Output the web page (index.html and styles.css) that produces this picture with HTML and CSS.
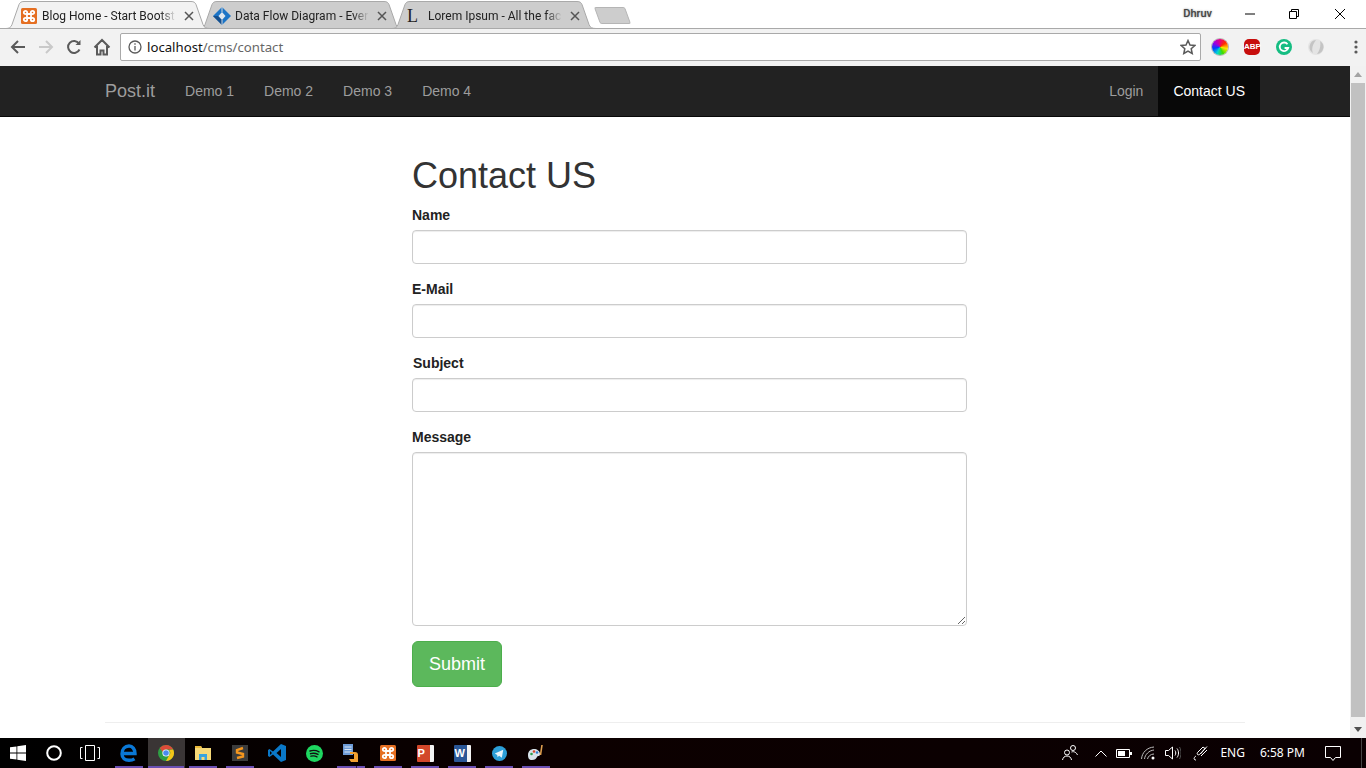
FILE: index.html
```html
<!DOCTYPE html>
<html lang="en">
<head>
    <meta charset="UTF-8">
    <meta name="viewport" content="width=device-width, initial-scale=1.0">
    <title>Contact US</title>
    <link rel="stylesheet" href="styles.css">
</head>
<body>
    <svg class="defs" width="0" height="0" aria-hidden="true">
        <symbol id="tab-shape" viewBox="0 0 204 28">
            <path d="M0 28c3 0 5-1 6-4l7-20c1-2 2-3 5-3h167c3 0 4 1 5 3l7 20c1 3 3 4 7 4z"/>
        </symbol>
        <symbol id="xampp" viewBox="0 0 16 16">
            <rect width="16" height="16" rx="1.5" fill="#e56f22"/>
            <g fill="none" stroke="#fff" stroke-width="1.800">
                <path d="M6 6h4v4H6z"/>
                <circle cx="4.500" cy="4.500" r="1.700"/>
                <circle cx="11.500" cy="4.500" r="1.700"/>
                <circle cx="4.500" cy="11.500" r="1.700"/>
                <circle cx="11.500" cy="11.500" r="1.700"/>
            </g>
            <path d="M6.900 7.300h2.200v1.400H6.900z" fill="#e56f22"/>
        </symbol>
        <symbol id="tab-x" viewBox="0 0 10 10">
            <path d="M1 1l8 8M9 1L1 9" stroke="#555" stroke-width="1.500"/>
        </symbol>
    </svg>

    <div class="tabstrip">
        <div class="tab active">
            <svg class="tab-bg"><use href="#tab-shape"/></svg>
            <svg class="favicon" width="16" height="16"><use href="#xampp"/></svg>
            <span class="tab-title">Blog Home - Start Bootst</span>
            <svg class="tab-close" width="10" height="10"><use href="#tab-x"/></svg>
        </div>
        <div class="tab">
            <svg class="tab-bg"><use href="#tab-shape"/></svg>
            <svg class="favicon wide" width="18" height="18" viewBox="0 0 18 18">
                <path d="M9 0l9 9-9 9-9-9z" fill="#1c74c6"/>
                <path d="M0 9l9 9V13L5 9z" fill="#164f8c"/>
                <path d="M9 5l3.500 4L9 13 5.500 9z" fill="#dfe6ee"/>
                <path d="M8.500 0h1v5h-1zM8.500 13h1v5h-1z" fill="#cfd6de"/>
            </svg>
            <span class="tab-title">Data Flow Diagram - Ever</span>
            <svg class="tab-close" width="10" height="10"><use href="#tab-x"/></svg>
        </div>
        <div class="tab">
            <svg class="tab-bg"><use href="#tab-shape"/></svg>
            <span class="favicon serif-l">L</span>
            <span class="tab-title">Lorem Ipsum - All the fac</span>
            <svg class="tab-close" width="10" height="10"><use href="#tab-x"/></svg>
        </div>
        <div class="new-tab"></div>
        <div class="window-bar">
            <span class="profile">Dhruv</span>
            <div class="window-buttons">
                <svg width="10" height="10" viewBox="0 0 10 10"><path d="M0 5h10" stroke="#000"/></svg>
                <svg width="10" height="10" viewBox="0 0 10 10" fill="none" stroke="#000"><path d="M.5 2.500h7v7h-7zM2.500 2.500v-2h7v7h-2"/></svg>
                <svg width="12" height="12" viewBox="0 0 12 12"><path d="M1 1l10 10M11 1L1 11" stroke="#000"/></svg>
            </div>
        </div>
    </div>

    <div class="toolbar">
        <div class="nav-buttons">
            <svg width="16" height="16" viewBox="0 0 16 16" fill="none" stroke="#5a5a5a" stroke-width="2"><path d="M15 8H2M8 2L2 8l6 6"/></svg>
            <svg width="16" height="16" viewBox="0 0 16 16" fill="none" stroke="#c9c9c9" stroke-width="2"><path d="M1 8h13M8 2l6 6-6 6"/></svg>
            <svg width="16" height="16" viewBox="0 0 16 16" fill="none" stroke="#5a5a5a" stroke-width="2"><path d="M13.500 10.500A6 6 0 1 1 13 4.500"/><path d="M14.500 1v5h-5z" fill="#5a5a5a" stroke="none"/></svg>
            <svg class="home" width="18" height="18" viewBox="0 0 18 18" fill="none" stroke="#5a5a5a" stroke-width="2"><path d="M1.500 9.500L9 2l7.500 7.500M4 8v8.500h3.500v-4h3v4H14V8"/></svg>
        </div>
        <div class="omnibox">
            <svg width="14" height="14" viewBox="0 0 14 14" fill="none" stroke="#5a5a5a" stroke-width="1.300"><circle cx="7" cy="7" r="6"/><path d="M7 6v4.500M7 3.200v1.500"/></svg>
            <span class="url"><span class="url-host">localhost</span>/cms/contact</span>
            <svg class="star" width="16" height="16" viewBox="0 0 16 16" fill="none" stroke="#5a5a5a" stroke-width="1.500"><path d="M8 1.500l2 4.500 4.800.500-3.600 3.200 1 4.800L8 12l-4.200 2.500 1-4.800L1.200 6.500 6 6z"/></svg>
        </div>
        <div class="extensions">
            <span class="ext-wheel"></span>
            <span class="ext-abp">ABP</span>
            <svg width="16" height="16" viewBox="0 0 16 16"><circle cx="8" cy="8" r="8" fill="#15bd82"/><path d="M11.500 5.200A4.300 4.300 0 1 0 12.200 9H8.600" fill="none" stroke="#fff" stroke-width="1.800"/></svg>
            <svg width="16" height="16" viewBox="0 0 16 16"><circle cx="8" cy="8" r="8" fill="#e4e4e4"/><path d="M8 1a7 7 0 0 0-3 13c-2-4 0-9 3-13zM9 15a7 7 0 0 0 3-13c1 4 0 9-3 13z" fill="#c4c4c4"/></svg>
            <svg class="menu-dots" width="4" height="14" viewBox="0 0 4 14" fill="#5a5a5a"><circle cx="2" cy="2" r="1.600"/><circle cx="2" cy="7" r="1.600"/><circle cx="2" cy="12" r="1.600"/></svg>
        </div>
    </div>

    <div class="viewport">
        <div class="page">
            <nav class="navbar">
                <div class="container nav-inner">
                    <a class="brand">Post.it</a>
                    <a class="nav-link">Demo 1</a>
                    <a class="nav-link">Demo 2</a>
                    <a class="nav-link">Demo 3</a>
                    <a class="nav-link">Demo 4</a>
                    <a class="nav-link push-right">Login</a>
                    <a class="nav-link current">Contact US</a>
                </div>
            </nav>
            <div class="container">
                <form class="contact-form">
                    <h1>Contact US</h1>
                    <div class="form-group">
                        <label for="name">Name</label>
                        <input type="text" id="name">
                    </div>
                    <div class="form-group">
                        <label for="email">E-Mail</label>
                        <input type="text" id="email">
                    </div>
                    <div class="form-group">
                        <label class="nudge" for="subject">Subject</label>
                        <input type="text" id="subject">
                    </div>
                    <div class="form-group">
                        <label for="message">Message</label>
                        <textarea id="message"></textarea>
                    </div>
                    <button type="button" class="submit">Submit</button>
                </form>
                <hr class="footer-line">
            </div>
        </div>
        <div class="scrollbar">
            <span class="arrow-up"></span>
            <div class="scroll-track"><div class="scroll-thumb"></div></div>
            <span class="arrow-down"></span>
        </div>
    </div>

    <div class="taskbar">
        <div class="task-left">
            <div class="task-sys">
                <svg width="16" height="16" viewBox="0 0 16 16" fill="#fff"><path d="M0 2.300l6.500-.9v6.200H0zM7.300 1.300L16 0v7.600H7.300zM0 8.400h6.500v6.200L0 13.700zM7.300 8.400H16V16l-8.700-1.300z"/></svg>
            </div>
            <div class="task-sys">
                <svg width="16" height="16" viewBox="0 0 16 16" fill="none" stroke="#fff" stroke-width="2"><circle cx="8" cy="8" r="6.800"/></svg>
            </div>
            <div class="task-sys">
                <svg width="20" height="16" viewBox="0 0 20 16" fill="none" stroke="#fff"><path d="M5.500.5h9v15h-9zM2.500 2.500H.5v11h2M17.500 2.500h2v11h-2"/></svg>
            </div>
            <div class="task-app open">
                <svg width="18" height="18" viewBox="0 0 18 18" fill="none" stroke="#0a78d7" stroke-width="3.400"><path d="M2.500 9.500h12.500C15 5 12.500 2 9 2 5 2 2 5 2 10c0 4 3 6.300 7 6.300 2 0 4-.5 5.500-1.500"/></svg>
            </div>
            <div class="task-app open active">
                <svg width="16" height="16" viewBox="0 0 16 16">
                    <circle cx="8" cy="8" r="8" fill="#2f9e44"/>
                    <path d="M8 0a8 8 0 0 1 7.200 4.500H8A3.500 3.500 0 0 0 4.700 7L1.800 2.900A8 8 0 0 1 8 0z" fill="#dd4b39"/>
                    <path d="M15.200 4.500A8 8 0 0 1 8 16l3-5.500A3.500 3.500 0 0 0 11 5z" fill="#f5c518"/>
                    <circle cx="8" cy="8" r="3.600" fill="#fff"/>
                    <circle cx="8" cy="8" r="2.800" fill="#4a8af0"/>
                </svg>
            </div>
            <div class="task-app open">
                <svg width="16" height="16" viewBox="0 0 16 16">
                    <path d="M0 1h6l1 2h9v12H0z" fill="#f6d978"/>
                    <path d="M0 1h6l1 2H0z" fill="#e9b93b"/>
                    <path d="M4 9h8v6H9.500v-3h-3v3H4z" fill="#38a3de"/>
                </svg>
            </div>
            <div class="task-app open">
                <svg width="16" height="16" viewBox="0 0 16 16">
                    <rect width="16" height="16" fill="#3c3c3c"/>
                    <path d="M11 4L5 6v2.500L11 10v2.500L5 14" transform="translate(0 -1)" fill="none" stroke="#f5961e" stroke-width="2.400"/>
                </svg>
            </div>
            <div class="task-app">
                <svg width="18" height="18" viewBox="0 0 18 18" fill="#0a78c8"><path d="M13 0l5 2v14l-5 2-8-7.500L1.500 13 0 12V6l1.500-1L5 7.500zM13 5L8.500 9 13 13zM2 7v4l2-2z"/></svg>
            </div>
            <div class="task-app">
                <svg width="17" height="17" viewBox="0 0 17 17"><circle cx="8.500" cy="8.500" r="8.500" fill="#1ed760"/><path d="M4 6c3-1 6-.8 9 .8M4.500 8.700c2.500-.8 5-.6 7.500.7M5 11.200c2-.6 4-.5 6 .6" fill="none" stroke="#111" stroke-width="1.400" stroke-linecap="round"/></svg>
            </div>
            <div class="task-app open stacked">
                <svg width="18" height="18" viewBox="0 0 18 18">
                    <rect x="1" y="0" width="10" height="11" fill="#6d9bd6"/>
                    <path d="M2.500 3h7M2.500 5.500h7M2.500 8h7" stroke="#d9e6f5"/>
                    <path d="M8 8h5c2 0 3 1 3 3v7H9l-2-3h5v-5H8z" fill="#f0a030"/>
                </svg>
            </div>
            <div class="task-app open"><svg width="16" height="16"><use href="#xampp"/></svg></div>
            <div class="task-app open">
                <span class="office-doc ppt"><span class="office-letter">P</span></span>
            </div>
            <div class="task-app open">
                <span class="office-doc word"><span class="office-letter">W</span></span>
            </div>
            <div class="task-app open">
                <svg width="15" height="15" viewBox="0 0 16 16"><circle cx="8" cy="8" r="8" fill="#2c9fd8"/><path d="M3 8l9-4-1.500 8.500-3-2-1.500 1.500-.5-2.500z" fill="#e6f4fb"/></svg>
            </div>
            <div class="task-app open">
                <svg width="18" height="18" viewBox="0 0 18 18">
                    <path d="M1 11c0-4 3-6 6-6s6 2 6 5-2 1-3 3-2 3-5 3-4-2-4-5z" fill="#d8e3ea"/>
                    <circle cx="4.500" cy="10" r="1.300" fill="#2e9e4f"/><circle cx="7" cy="7.500" r="1.300" fill="#d9472b"/><circle cx="10" cy="8.500" r="1.300" fill="#2f7fd1"/>
                    <path d="M15 1l-1.500 10" stroke="#e0a050" stroke-width="1.600"/>
                </svg>
            </div>
        </div>
        <div class="tray">
            <svg class="tray-people" width="16" height="16" viewBox="0 0 16 16" fill="none" stroke="#fff"><circle cx="5" cy="7.500" r="2.500"/><path d="M.5 15c.5-2.500 2-4 4.500-4s4 1.500 4.500 4"/><circle cx="11" cy="3" r="2.500"/><path d="M9.500 7c2.500-1 5 .5 6 3"/></svg>
            <svg class="tray-chevron" width="12" height="7" viewBox="0 0 12 7" fill="none" stroke="#fff"><path d="M.5 6.500L6 1l5.500 5.500"/></svg>
            <svg class="tray-battery" width="16" height="9" viewBox="0 0 16 9"><path d="M.5.500h13v8H.5z" fill="none" stroke="#fff"/><path d="M2 2h7v5H2z" fill="#fff"/><path d="M14 3h2v3h-2z" fill="#fff"/></svg>
            <svg class="tray-wifi" width="14" height="14" viewBox="0 0 14 14" fill="none" stroke="#bbb"><path d="M.5 13C1 6.500 6 1.500 13 1M3.500 13C4 8.500 8 4.500 13 4M6.500 13c.5-2.500 3-5 6.500-5"/><circle cx="12" cy="12" r="1.500" fill="#fff" stroke="none"/></svg>
            <svg class="tray-volume" width="16" height="14" viewBox="0 0 16 14" fill="none" stroke="#fff"><path d="M.5 4.500h3L7.500 1v12l-4-3.500h-3zM10 4.500c1 1.500 1 3.500 0 5M12 2.500c2 2.500 2 6.500 0 9"/><path d="M14.500 1c2 3.500 2 8.500 0 12" stroke="#555"/></svg>
            <svg class="tray-pen" width="16" height="16" viewBox="0 0 16 16" fill="none" stroke="#fff"><path d="M14 1.500L7 9c-1 1-2 1-2.500.5S4 8 5 7l5-5 2 1.500M12.500 3L7.500 9M3 15c-3 0-2-3 0-4"/><path d="M14 5l-6 6"/></svg>
            <span class="tray-text eng">ENG</span>
            <span class="tray-text clock">6:58 PM</span>
            <svg class="tray-notify" width="16" height="15" viewBox="0 0 16 15" fill="none" stroke="#fff"><path d="M.5.500h15v11h-5L8 14.500 5.500 11.500h-5z"/></svg>
            <span class="show-desktop"></span>
        </div>
    </div>
</body>
</html>
```

FILE: styles.css
```css
html, body {
    height: 100%;
}

body {
    margin: 0;
    display: flex;
    flex-direction: column;
    overflow: hidden;
    font-family: "Liberation Sans", Arial, sans-serif;
    font-size: 14px;
    line-height: 20px;
    color: #333;
    background: #fff;
}

.defs {
    display: none;
}

/* tab strip */
.tabstrip {
    height: 29px;
    flex: none;
    display: flex;
    box-sizing: border-box;
    padding-left: 6px;
    border-bottom: 1px solid #a9a9a9;
    font-family: Roboto, sans-serif;
    font-size: 12px;
}

.tab {
    position: relative;
    width: 204px;
    height: 29px;
    flex: none;
    margin-right: -11px;
    display: flex;
    align-items: center;
    padding: 2px 0 0 15px;
    box-sizing: border-box;
    color: #222;
}

.tab-bg {
    position: absolute;
    left: 0;
    top: 0;
    width: 204px;
    height: 29px;
    fill: #cdcdcd;
    stroke: #a9a9a9;
}

.tab.active {
    z-index: 2;
}

.tab.active .tab-bg {
    fill: #f2f2f2;
}

.favicon {
    position: relative;
    width: 16px;
    height: 16px;
    flex: none;
}

.favicon.wide {
    width: 18px;
    height: 18px;
    margin: 0 -1px;
}

.serif-l {
    font-family: "Liberation Serif", serif;
    font-size: 18px;
    line-height: 16px;
    color: #222;
}

.tab-title {
    position: relative;
    width: 134px;
    margin-left: 5px;
    white-space: nowrap;
    line-height: 16px;
    -webkit-mask-image: linear-gradient(to right, #000 118px, transparent 134px);
    mask-image: linear-gradient(to right, #000 118px, transparent 134px);
}

.tab-close {
    position: relative;
    flex: none;
    margin-left: 8px;
}

.new-tab {
    width: 29px;
    height: 15px;
    margin: 7px 0 0 12px;
    flex: none;
    background: #cdcdcd;
    border: 1px solid #b5b5b5;
    border-radius: 2px;
    transform: skewX(20deg);
}

.window-bar {
    flex: 1;
    display: flex;
    align-items: flex-start;
    justify-content: flex-end;
}

.profile {
    margin: 6px 33px 0 0;
    font-size: 11px;
    line-height: 16px;
    font-weight: 500;
    color: #444;
    text-shadow: 0 0 2px #888;
}

.window-buttons {
    display: flex;
    align-items: center;
    gap: 34px;
    margin: 8px 20px 0 0;
}

.window-buttons svg:last-child {
    margin-left: 1px;
}

/* toolbar */
.toolbar {
    height: 37px;
    flex: none;
    display: flex;
    align-items: center;
    box-sizing: border-box;
    padding-bottom: 1px;
    background: #f2f2f2;
}

.nav-buttons {
    width: 120px;
    flex: none;
    display: flex;
    align-items: center;
    gap: 12px;
    padding-left: 10px;
    box-sizing: border-box;
}

.nav-buttons .home {
    margin-left: -1px;
}

.omnibox {
    width: 1081px;
    height: 28px;
    flex: none;
    display: flex;
    align-items: center;
    box-sizing: border-box;
    padding: 0 5px 0 7px;
    background: #fff;
    border: 1px solid #a9a9a9;
    border-radius: 2px;
}

.url {
    margin-left: 5px;
    font-family: "Noto Sans", sans-serif;
    font-size: 13.200px;
    color: #666;
}

.url-host {
    color: #111;
}

.star {
    margin-left: auto;
    margin-right: -1px;
}

.extensions {
    flex: 1;
    display: flex;
    align-items: center;
    gap: 16px;
    padding-left: 11px;
}

.ext-wheel {
    width: 16px;
    height: 16px;
    border-radius: 50%;
    background: conic-gradient(#e6007e, #ff2a00, #ffe600, #3ddc00, #00d5d5, #0040ff, #a000e0, #e6007e);
    box-shadow: 0 0 0 1px rgba(0, 0, 0, 0.25);
}

.ext-abp {
    width: 16px;
    height: 16px;
    border-radius: 5px;
    background: #c70d0c;
    color: #fff;
    font-size: 8px;
    font-weight: bold;
    line-height: 16px;
    text-align: center;
}

.menu-dots {
    margin-left: 14px;
}

/* page */
.viewport {
    flex: 1;
    min-height: 0;
    display: flex;
}

.page {
    flex: 1;
    min-width: 0;
    overflow: hidden;
}

.container {
    width: 1140px;
    margin: 0 auto;
}

.navbar {
    height: 51px;
    box-sizing: border-box;
    background: #222;
    border-bottom: 1px solid #080808;
}

.nav-inner {
    display: flex;
    height: 50px;
}

.brand {
    font-size: 18px;
    line-height: 50px;
    color: #9d9d9d;
    margin-right: 15px;
}

.nav-link {
    padding: 15px;
    color: #9d9d9d;
}

.nav-link.push-right {
    margin-left: auto;
}

.nav-link.current {
    margin-right: -15px;
    color: #fff;
    background: #080808;
}

.contact-form {
    width: 555px;
    margin-left: 307px;
    padding-top: 39px;
}

h1 {
    margin: 0 0 9px;
    font-size: 36px;
    font-weight: 500;
    line-height: 40px;
}

.form-group {
    margin-bottom: 15px;
}

label {
    display: block;
    margin-bottom: 5px;
    font-weight: bold;
    color: #222;
}

label.nudge {
    margin-left: 1px;
}

input, textarea {
    display: block;
    width: 100%;
    box-sizing: border-box;
    background: #fff;
    border: 1px solid #ccc;
    border-radius: 4px;
    box-shadow: inset 0 1px 1px rgba(0, 0, 0, 0.075);
}

input {
    height: 34px;
}

textarea {
    height: 174px;
}

.submit {
    display: block;
    width: 90px;
    height: 46px;
    padding: 0;
    font-family: inherit;
    font-size: 18px;
    color: #fff;
    background: #5cb85c;
    border: 1px solid #4cae4c;
    border-radius: 6px;
}

.footer-line {
    margin: 35px 0 0;
    border: 0;
    border-top: 1px solid #eee;
}

/* scrollbar */
.scrollbar {
    width: 16px;
    flex: none;
    display: flex;
    flex-direction: column;
    background: #f1f1f1;
}

.arrow-up, .arrow-down {
    width: 0;
    height: 0;
    flex: none;
    margin: 6px auto;
    border-left: 4px solid transparent;
    border-right: 4px solid transparent;
}

.arrow-up {
    border-bottom: 5px solid #a3a3a3;
}

.arrow-down {
    border-top: 5px solid #505050;
}

.scroll-track {
    flex: 1;
    padding: 0 1px;
}

.scroll-thumb {
    height: 634px;
    background: #c1c1c1;
}

/* taskbar */
.taskbar {
    height: 30px;
    flex: none;
    display: flex;
    background: linear-gradient(to right, #000 0, #0c0000 40%, #0a0002 100%);
    color: #fff;
}

.task-left {
    display: flex;
}

.task-sys {
    width: 36px;
    display: flex;
    align-items: center;
    justify-content: center;
}

.task-sys:nth-child(3) {
    margin-right: 3px;
}

.task-app {
    position: relative;
    width: 37px;
    display: flex;
    align-items: center;
    justify-content: center;
}

.task-app > :first-child {
    margin-right: 1px;
}

.task-app.open::after {
    content: "";
    position: absolute;
    left: 4px;
    right: 5px;
    bottom: 0;
    height: 2px;
    background: #6a4fb3;
}

.task-app.active {
    background: #3a3535;
}

.task-app.active::after {
    left: 0;
    right: 1px;
}

.task-app.stacked::before {
    content: "";
    position: absolute;
    right: 13px;
    bottom: 0;
    width: 1px;
    height: 2px;
    background: #2a2040;
    z-index: 1;
}

.office-doc {
    width: 17px;
    height: 17px;
    display: flex;
    align-items: center;
    justify-content: flex-start;
    padding-left: 1px;
    box-sizing: border-box;
    border-right: 4px solid #f4f4f4;
    border-radius: 1px;
}

.ppt {
    background: #d2472a;
}

.word {
    background: #2b5797;
}

.office-letter {
    font-size: 11px;
    font-weight: bold;
    line-height: 17px;
    color: #fff;
}

.tray {
    flex: 1;
    display: flex;
    align-items: center;
    justify-content: flex-end;
    font-family: "Noto Sans", sans-serif;
    font-size: 12px;
}

.tray-chevron {
    margin-left: 17px;
}

.tray-battery {
    margin-left: 9px;
}

.tray-wifi {
    margin-left: 9px;
}

.tray-volume {
    margin-left: 10px;
}

.tray-pen {
    margin-left: 12px;
}

.tray-text.eng {
    margin-left: 11px;
}

.tray-text.clock {
    margin-left: 15px;
}

.tray-notify {
    margin-left: 20px;
}

.show-desktop {
    width: 1px;
    height: 30px;
    margin-left: 20px;
    margin-right: 4px;
    background: #444;
}
```
